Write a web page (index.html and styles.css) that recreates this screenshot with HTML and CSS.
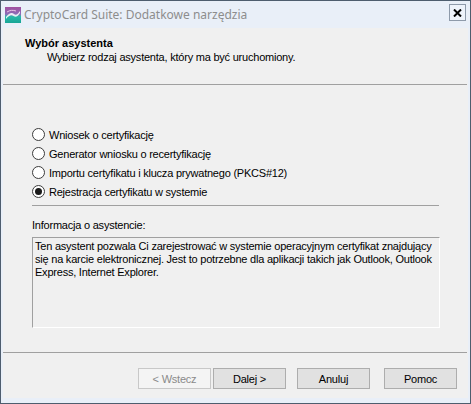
FILE: index.html
```html
<!DOCTYPE html>
<html lang="pl">
<head>
<meta charset="utf-8">
<title>CryptoCard Suite</title>
<link rel="stylesheet" href="styles.css">
</head>
<body>
<div class="window">
  <div class="titlebar">
    <svg class="app-icon" width="16" height="16" viewBox="0 0 16 16">
      <defs>
        <linearGradient id="g" x1="0" y1="0" x2="0" y2="1">
          <stop offset="0" stop-color="#a14f9e"/>
          <stop offset="0.45" stop-color="#8c6cb8"/>
          <stop offset="0.6" stop-color="#29b8a8"/>
          <stop offset="1" stop-color="#17a596"/>
        </linearGradient>
      </defs>
      <rect x="0" y="0" width="16" height="16" fill="url(#g)"/>
      <path d="M1 10 C4 6 7 5 9 7 C11 9 13 7 15 4 L15 6 C13 9 11 11 8.5 9 C6.5 7.5 4 8 1 12 Z" fill="#ffffff" opacity="0.85"/>
      <path d="M2 5 C5 3 8 3 11 4" stroke="#e8c4e6" stroke-width="1" fill="none"/>
    </svg>
    <span class="title">CryptoCard Suite: Dodatkowe narzędzia</span>
    <div class="close">
      <svg width="9" height="8" viewBox="0 0 9 8"><path d="M1 0.5 L8 7.5 M8 0.5 L1 7.5" stroke="#000" stroke-width="2"/></svg>
    </div>
  </div>
  <div class="client">
    <div class="header">
      <div class="h-title">Wybór asystenta</div>
      <div class="h-sub">Wybierz rodzaj asystenta, który ma być uruchomiony.</div>
    </div>
    <div class="sep"></div>
    <div class="options">
      <div class="radio-row"><span class="radio"></span><span>Wniosek o certyfikację</span></div>
      <div class="radio-row"><span class="radio"></span><span>Generator wniosku o recertyfikację</span></div>
      <div class="radio-row"><span class="radio"></span><span>Importu certyfikatu i klucza prywatnego (PKCS#12)</span></div>
      <div class="radio-row"><span class="radio checked"></span><span>Rejestracja certyfikatu w systemie</span></div>
    </div>
    <div class="sep inner"></div>
    <div class="info-label">Informacja o asystencie:</div>
    <div class="info-box">Ten asystent pozwala Ci zarejestrować w systemie operacyjnym certyfikat znajdujący się na karcie elektronicznej. Jest to potrzebne dla aplikacji takich jak Outlook, Outlook Express, Internet Explorer.</div>
    <div class="sep bottom"></div>
    <div class="buttons">
      <button class="btn disabled">&lt; Wstecz</button>
      <button class="btn next">Dalej &gt;</button>
      <button class="btn cancel">Anuluj</button>
      <button class="btn help">Pomoc</button>
    </div>
  </div>
</div>
</body>
</html>
```
FILE: styles.css
```css
* { box-sizing: border-box; }
html, body { margin: 0; padding: 0; }
body {
  width: 471px;
  height: 404px;
  overflow: hidden;
  font-family: "Liberation Sans", Arial, sans-serif;
  font-size: 11px;
  letter-spacing: -0.22px;
  color: #000;
}
.window {
  width: 471px;
  height: 404px;
  border: 1px solid #4e5d6e;
  background: #e9eff8;
  display: flex;
  flex-direction: column;
  padding: 0 2px 5px 2px;
}
.titlebar {
  height: 27px;
  display: flex;
  align-items: center;
  padding-left: 2px;
  flex-shrink: 0;
}
.app-icon { margin-top: 1px; }
.title {
  font-family: "Noto Sans", "Open Sans", sans-serif;
  font-size: 12px;
  letter-spacing: 0;
  color: #8d8d8d;
  margin-left: 3px;
}
.close {
  margin-left: auto;
  margin-right: 2px;
  margin-top: -4px;
  width: 17px;
  height: 17px;
  border: 1px solid #8e9aaa;
  background: #eef3fb;
  display: flex;
  align-items: center;
  justify-content: center;
}
.client {
  flex: 1;
  background: #f0f0f0;
  display: flex;
  flex-direction: column;
}
.header {
  height: 56px;
  padding: 8px 0 0 22px;
  line-height: 14px;
}
.h-title { font-weight: bold; letter-spacing: 0; }
.h-sub { margin-left: 22px; }
.sep {
  height: 1px;
  background: #a0a0a0;
  margin: 0 1px 0 0;
  flex-shrink: 0;
}
.options {
  padding: 40px 0 0 29px;
}
.radio-row {
  height: 19px;
  display: flex;
  align-items: center;
}
.radio {
  width: 13px;
  height: 13px;
  border-radius: 50%;
  border: 1px solid #3c3c3c;
  background: #fff;
  margin-right: 4px;
  display: flex;
  align-items: center;
  justify-content: center;
}
.radio.checked::after {
  content: "";
  width: 7px;
  height: 7px;
  border-radius: 50%;
  background: #1a1a1a;
}
.sep.inner {
  margin: 4px 0 0 29px;
  width: 407px;
}
.info-label {
  margin: 12px 0 0 29px;
  line-height: 14px;
}
.info-box {
  margin: 5px 0 0 29px;
  width: 408px;
  height: 91px;
  border-top: 1px solid #a0a0a0;
  border-left: 1px solid #a0a0a0;
  border-right: 1px solid #fff;
  border-bottom: 1px solid #fff;
  padding: 2px 1px 0 2px;
  line-height: 13px;
}
.sep.bottom {
  margin-top: 24px;
}
.buttons {
  display: flex;
  padding: 15px 0 0 135px;
}
.btn {
  width: 73px;
  height: 21px;
  border: 1px solid #adadad;
  background: #e1e1e1;
  font-family: "Liberation Sans", Arial, sans-serif;
  font-size: 11px;
  letter-spacing: -0.22px;
  color: #000;
  padding: 0;
}
.btn.disabled {
  color: #8a8a8a;
  background: #f4f4f4;
  border-color: #c8c8c8;
}
.btn.next { margin-left: 2px; }
.btn.cancel { margin-left: 11px; }
.btn.help { margin-left: 14px; }
```
